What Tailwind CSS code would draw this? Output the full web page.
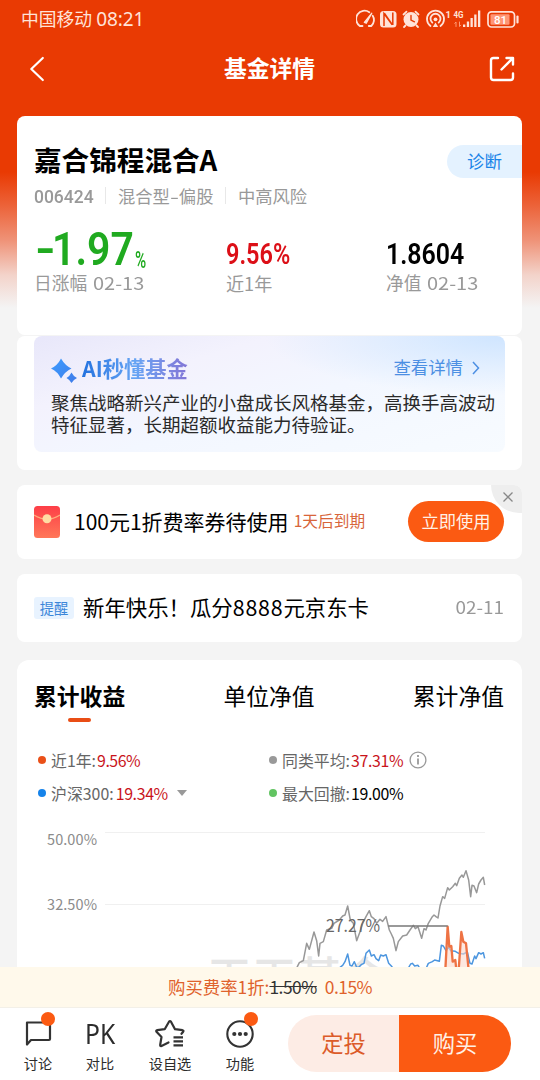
<!DOCTYPE html>
<html lang="zh-CN">
<head>
<meta charset="utf-8">
<title>基金详情</title>
<script src="https://cdn.jsdelivr.net/npm/@tailwindcss/browser@4"></script>
</head>
<body class="bg-[#f4f4f4]">
<div class="flex h-[1080px] w-[540px] flex-col overflow-hidden whitespace-nowrap bg-[#f4f4f4] font-['Noto_Sans_CJK_SC',sans-serif] leading-none text-black">
  <div class="flex h-[967px] shrink-0 flex-col overflow-hidden bg-[linear-gradient(180deg,#e93a03_0px,#e93a03_172px,#ec6238_205px,#ef9277_240px,#f3d3ca_275px,#f4f4f4_308px)]">
    <!-- status bar -->
    <div class="flex h-[38px] shrink-0 items-center justify-between pl-[21px] pr-[20px] text-[#ffe3d9]">
      <div class="flex items-center gap-[4px] text-[17.8px]"><span>中国移动</span><span class="font-['Noto_Sans'] text-[19px] tracking-[-0.1px]">08:21</span></div>
      <svg class="h-[24px] w-[164px]" viewBox="356 6 164 24" fill="none" stroke="#ffe3d9" stroke-width="1.8" stroke-linecap="round">
        <path d="M359.800 25A8 8 0 0 1 369.300 11.200M372.700 14.800A8 8 0 0 1 371.300 25M359.800 25h2.700M368.800 25h2.500" />
        <path d="M364.300 21.500L371.800 12.200L366.300 22.300Z" fill="#ffe3d9" stroke-width="1.200" stroke-linejoin="round"/>
        <rect x="380" y="10" width="16.500" height="16.500" rx="3.500" fill="#ffe3d9" stroke="none"/>
        <path d="M384 25V12.500L392 23.500M392.800 11.500V24M384.500 12.500L392.300 23.800" stroke="#e93a03" stroke-width="1.500" stroke-linecap="butt"/>
        <circle cx="411" cy="18.500" r="7.500" fill="#ffe3d9" stroke="none"/>
        <path d="M403.500 13.500l3-2.800M418.500 13.500l-3-2.800M405.500 24.500l-1.500 1.500M416.500 24.500l1.500 1.500"/>
        <path d="M411 14.500V19l3.500 1.800" stroke="#e93a03" stroke-width="1.400"/>
        <path d="M430.500 25A8.500 8.500 0 1 1 440.500 25M432.300 21.600A5 5 0 1 1 438.700 21.600"/>
        <circle cx="435.500" cy="18.300" r="1.900" fill="#ffe3d9" stroke="none"/><path d="M432.800 26l2.700-4.500 2.700 4.500z" fill="#ffe3d9" stroke="none"/>
        <g fill="#ffe3d9" stroke="none" font-family="Roboto,sans-serif" font-weight="700">
          <text x="445.500" y="16.500" font-size="9.500">1</text>
          <text x="453.500" y="17" font-size="9.500" textLength="10" lengthAdjust="spacingAndGlyphs">4G</text>
          <path d="M463 23.500h2.300v2.500H463zM466.800 20.500h2.300v5.500h-2.300zM470.500 17h2.300v9h-2.300zM474.200 13.500h2.300v12.500h-2.300zM478 9.500h2.300V26H478z"/>
        </g>
        <path d="M456 25.500v-4.500l-1.300 1.300M459.500 21v4.500l1.300-1.300" stroke="#ff9a75" stroke-width="1"/>
        <rect x="488" y="10.800" width="26.500" height="15.200" rx="3.500" stroke-width="1.700"/>
        <rect x="490.500" y="13.200" width="19" height="10.500" rx="1" fill="#ff9675" stroke="none"/>
        <path d="M517.500 15.500v6" stroke-width="2.200"/>
        <text x="494" y="22.500" font-family="Roboto,sans-serif" font-size="11.500" font-weight="500" fill="#fff" stroke="none">81</text>
      </svg>
    </div>
    <!-- title bar -->
    <div class="flex h-[78px] shrink-0 items-start justify-between pl-[29px] pr-[24px] pt-[17px] text-white">
      <svg class="mt-[1px] h-[26px] w-[18px]" viewBox="0 0 18 26" fill="none" stroke="#fff" stroke-width="2.200" stroke-linecap="round" stroke-linejoin="round"><path d="M13.800 2L2.300 13l11.500 11"/></svg>
      <h1 class="ml-[4px] mt-[2px] text-[22.800px] font-bold">基金详情</h1>
      <svg class="h-[28px] w-[28px]" viewBox="0 0 28 28" fill="none" stroke="#fff" stroke-width="2.400" stroke-linecap="round" stroke-linejoin="round"><path d="M10 3H5.500Q3 3 3 5.500v17Q3 25 5.500 25h17q2.500 0 2.500-2.500V18.500M18.500 3H25v6.500M25 3L13.500 14.500"/></svg>
    </div>
    <!-- fund summary -->
    <section class="ml-[17px] mr-[18px] flex h-[219px] shrink-0 flex-col rounded-[8px] bg-white pl-[17px]">
      <div class="mt-[29px] flex h-[33px] items-center justify-between">
        <h2 class="-mt-[3px] text-[27.600px] font-bold">嘉合锦程混合A</h2>
        <div class="flex h-[33px] w-[75px] items-center rounded-l-full bg-[#e4f2ff] pb-[2px] pl-[20px] text-[17.500px] text-[#1a84e8]">诊断</div>
      </div>
      <div class="mt-[8px] flex h-[19px] items-center text-[17.300px] text-[#999]">
        <span class="w-[71px] pt-[2px] font-['Roboto'] text-[19px] font-medium"><span class="inline-block origin-left scale-x-[0.920]">006424</span></span>
        <span class="h-[17px] w-px shrink-0 bg-[#e8e8e8]"></span>
        <span class="flex w-[119px] items-center pl-[12px]">混合型<span class="inline-block w-[9px] origin-left scale-x-[1.500]">-</span>偏股</span>
        <span class="h-[17px] w-px shrink-0 bg-[#e8e8e8]"></span>
        <span class="pl-[12px]">中高风险</span>
      </div>
      <div class="mt-[25px] grid grid-cols-[192px_160px_auto] text-[#999]">
        <div>
          <div class="flex h-[40px] items-end font-['Roboto'] font-semibold text-[#20aa20]"><span class="mb-px inline-flex w-[101px] text-[46px] leading-[40px]"><span class="inline-block w-[22px] origin-left scale-x-[1.200] pl-[1px]">-</span><span class="inline-block origin-left scale-x-[0.890]">1.97</span></span><span class="inline-block origin-left scale-x-[0.660] text-[23px] font-medium leading-[18px]">%</span></div>
          <div class="mt-[4px] text-[17.700px]">日涨幅 <span class="ml-[2px] inline-block origin-left scale-x-[1.130]">02-13</span></div>
        </div>
        <div>
          <div class="flex h-[40px] items-end pb-[1px] font-['Roboto'] text-[29px] font-semibold text-[#dc0f17]"><span class="inline-block origin-left scale-x-[0.810]">9.56%</span></div>
          <div class="mt-[4px] text-[18.100px]">近1年</div>
        </div>
        <div>
          <div class="flex h-[40px] items-end pb-[1px] font-['Roboto'] text-[29px] font-semibold text-black"><span class="inline-block origin-left scale-x-[0.860]">1.8604</span></div>
          <div class="mt-[4px] text-[17.700px]">净值 <span class="ml-[2px] inline-block origin-left scale-x-[1.130]">02-13</span></div>
        </div>
      </div>
    </section>
    <!-- AI summary -->
    <section class="ml-[17px] mr-[18px] mt-[1px] h-[134px] shrink-0 rounded-[8px] bg-white px-[17px]">
      <div class="h-[116px] rounded-[8px] bg-[radial-gradient(ellipse_at_100%_0%,#cfe5ff_0%,#cfe5ff00_36%),linear-gradient(163deg,#e8e7fa_0%,#f3f2fd_28%,#f3f7ff_55%,#f7fbff_100%)] px-[17px] pt-[19px]">
        <div class="flex h-[28px] items-center">
          <svg class="h-[28px] w-[30px]" viewBox="0 0 30 28"><defs><linearGradient id="spark" x2="1" y2="1"><stop stop-color="#3d9cff"/><stop offset="1" stop-color="#3f7be8"/></linearGradient></defs><path fill="url(#spark)" d="M10 3.500Q14 10.500 20.500 13.500Q14 16.500 10 23.500Q6.500 16.500 0 13.500Q6.500 10.500 10 3.500ZM20.500 17.500Q22.300 21.200 26 23Q22.300 24.800 20.500 28Q18.800 24.800 15.500 23Q18.800 21.200 20.500 17.500Z"/></svg>
          <span class="-mt-[2px] ml-[1px] bg-linear-to-r from-[#2272df] via-[#65a4f4] to-[#8276d6] bg-clip-text text-[21.300px] font-bold leading-[28px] text-transparent">AI秒懂基金</span>
          <span class="ml-auto mr-[9px] mt-[-4px] text-[17.400px] text-[#4c8fe3]">查看详情</span>
          <svg class="-mt-[2px] mr-[8px] h-[14px] w-[8px]" viewBox="0 0 8 14" fill="none" stroke="#4c8fe3" stroke-width="1.500"><path d="M1 1l5.500 6L1 13"/></svg>
        </div>
        <p class="mt-[8px] text-[18.500px] leading-[22px] text-[#2a2a2a]">聚焦战略新兴产业的小盘成长风格基金，高换手高波动<br>特征显著，长期超额收益能力待验证。</p>
      </div>
    </section>
    <!-- coupon -->
    <section class="relative ml-[17px] mr-[18px] mt-[15px] flex h-[74px] shrink-0 items-center overflow-hidden rounded-[8px] bg-white pl-[17px] pr-[18px]">
      <svg class="h-[32px] w-[26px]" viewBox="0 0 26 32"><defs><linearGradient id="env" x2="0" y2="1"><stop stop-color="#fd3e47"/><stop offset="1" stop-color="#ff7759"/></linearGradient></defs><rect width="26" height="32" rx="3.500" fill="url(#env)"/><path d="M0 9Q13 17.500 26 9" fill="none" stroke="#ffae7c" stroke-width="1.200"/><circle cx="13" cy="12.800" r="4.500" fill="#ffdca3"/></svg>
      <span class="-mt-[2px] ml-[14px] text-[21px]">100元1折费率券待使用</span>
      <span class="ml-[5px] mt-[-3px] text-[15.700px] text-[#d8653a]">1天后到期</span>
      <span class="-mt-px ml-auto flex h-[41px] w-[96px] items-center justify-center rounded-full bg-[#fb5a12] pb-[2px] text-[17.300px] text-[#fff1e6]">立即使用</span>
      <span class="absolute right-0 top-0 flex h-[28px] w-[31px] items-center justify-center rounded-bl-[28px] bg-[#eee] pl-[3px] pt-[1px]"><svg class="-mt-[5px] h-[10px] w-[10px]" viewBox="0 0 10 10" stroke="#888" stroke-width="1.300"><path d="M.5.500l9 9M9.500.500l-9 9"/></svg></span>
    </section>
    <!-- notice -->
    <section class="ml-[17px] mr-[18px] mt-[15px] flex h-[68px] shrink-0 items-center rounded-[8px] bg-white pl-[17px] pr-[18px]">
      <span class="flex h-[22px] w-[40px] items-center justify-center rounded-[3px] bg-[#e8f3ff] text-[14.300px] text-[#3b86d9]">提醒</span>
      <span class="-mt-[2px] ml-[9px] text-[21.400px]">新年快乐！瓜分<span class="tracking-[0.800px]">8888</span>元京东卡</span>
      <span class="-mt-[2px] ml-auto origin-right scale-x-[1.080] text-[17.500px] text-[#999]">02-11</span>
    </section>
    <!-- performance -->
    <section class="ml-[17px] mr-[18px] mt-[18px] flex h-[330px] shrink-0 flex-col rounded-t-[12px] bg-white">
      <div class="flex justify-between pl-[17px] pr-[18px] pt-[25px] text-[22.800px]">
        <div class="flex flex-col items-center gap-[10px] font-bold"><span>累计收益</span><i class="h-[4px] w-[23px] rounded-full bg-[#e94d15]"></i></div>
        <span>单位净值</span><span>累计净值</span>
      </div>
      <div class="mt-[22px] grid grid-cols-[231px_auto] pl-[21px] text-[15.900px] leading-[33px] text-[#666]">
        <div class="flex items-center"><i class="mr-[5px] h-[8px] w-[8px] rounded-full bg-[#ea5018]"></i>近1年:<span class="ml-px tracking-[-0.450px] text-[#c9141b]">9.56%</span></div>
        <div class="flex items-center"><i class="mr-[5px] h-[8px] w-[8px] rounded-full bg-[#999]"></i>同类平均:<span class="ml-px tracking-[-0.350px] text-[#c9141b]">37.31%</span><svg class="ml-[6px] h-[18px] w-[18px]" viewBox="0 0 18 18" fill="none" stroke="#999" stroke-width="1.300"><circle cx="9" cy="9" r="7.900"/><path d="M9 7.500v6M9 4v2" stroke-width="1.800"/></svg></div>
        <div class="flex items-center"><i class="mr-[5px] h-[8px] w-[8px] rounded-full bg-[#1683ea]"></i>沪深300:<span class="ml-[2px] tracking-[-0.350px] text-[#c9141b]">19.34%</span><i class="ml-[9px] border-x-[5px] border-t-[6px] border-x-transparent border-t-[#999]"></i></div>
        <div class="flex items-center"><i class="mr-[5px] h-[8px] w-[8px] rounded-full bg-[#62c462]"></i>最大回撤:<span class="ml-px tracking-[-0.350px] text-black">19.00%</span></div>
      </div>
      <svg class="mt-[10px] h-[170px] w-[505px] shrink-0" viewBox="17 820 505 170" fill="none">
        <path d="M105 832.500H485M105 904.500H485" stroke="#f0f0f0"/>
        <g fill="#8c8c8c" font-size="14.500" font-family="'Noto Sans CJK SC',sans-serif"><text x="47" y="844.500" textLength="50">50.00%</text><text x="47" y="909.500" textLength="50">32.50%</text></g>
        <text x="207" y="995" font-size="45" font-weight="500" fill="#e6e6e6" font-family="'Noto Sans CJK SC',sans-serif">天天基金</text>
        <g transform="translate(180 820) scale(.33333)" stroke-linejoin="round">
          <path stroke="#989898" stroke-width="4.500" d="M346 450L352 440 358 428 370 422 380 370 388 388 402 336 410 362 416 408 420 370 430 365 440 330 455 325 462 310 478 300 488 288 495 285 503 258 511 300 520 310 530 362 540 335 548 310 558 290 568 272 574 290 582 296 590 310 600 298 608 304 618 290 628 330 634 342 640 355 648 392 655 365 668 348 680 345 690 330 700 316 706 326 714 320 725 355 732 326 738 330 745 310 757 290 762 285 768 290 774 294 780 258 788 230 794 235 803 203 808 210 818 200 826 190 830 197 838 175 846 165 850 172 858 152 866 180 872 230 876 196 882 198 890 218 896 192 903 180 910 172 914 195"/>
          <path stroke="#4d96df" stroke-width="4.500" d="M480 442L488 436 495 425 503 402 510 436 516 438 523 425 530 442 536 442 545 433 552 430 558 400 568 390 574 408 582 404 588 416 596 422 602 405 610 408 618 404 626 430 634 438 640 446 684 446 692 432 697 430 704 438 714 436 720 446 738 446 745 430 757 425 764 420 778 424 784 376 790 378 798 392 806 382 812 392 826 394 836 400 850 402 862 396 870 430 876 432 884 408 888 416 896 398 903 402 910 398 914 415"/>
          <path fill="#fbd9cc" fill-opacity=".6" stroke="#ee7344" stroke-width="7" d="M796 450L803 320 808 380 814 378 818 425 826 420 829 450 836 450 844 336 850 365 858 370 862 410 866 450"/>
          <path stroke="#777" stroke-width="5" d="M625 318H803"/>
        </g>
        <text x="326" y="932" font-size="17" fill="#666" textLength="54" lengthAdjust="spacingAndGlyphs" font-family="'Noto Sans CJK SC',sans-serif">27.27%</text>
      </svg>
    </section>
  </div>
  <!-- fee bar -->
  <div class="flex h-[41px] shrink-0 items-center border-b border-[#f3f0e8] bg-[#fff9eb] pl-[168px] text-[17.400px] text-[#df622c]"><span>购买费率1折:</span><s class="tracking-[-0.500px] text-[#333]">1.50%</s><span class="ml-[8px] tracking-[-0.500px]">0.15%</span></div>
  <!-- action bar -->
  <div class="flex h-[72px] shrink-0 bg-white text-[14.200px] text-[#2c2c2c]">
    <nav class="grid w-[288px] grid-cols-[76px_48px_92px_48px] pt-[10px]">
      <div class="flex flex-col items-center"><div class="relative h-[32px] w-[32px]"><svg class="h-[32px] w-[32px]" viewBox="0 0 32 32" fill="none" stroke="#333" stroke-width="2.200" stroke-linejoin="round"><path d="M5 4.500h22a1 1 0 0 1 1 1v15.500a1 1 0 0 1-1 1H9l-4 4.500z"/></svg><i class="absolute left-[19px] top-[-6px] h-[14px] w-[14px] rounded-full bg-[#fb5a12]"></i></div><span class="mt-[6px]">讨论</span></div>
      <div class="flex flex-col items-center"><div class="flex h-[32px] items-center pb-[2px] font-['Noto_Sans'] text-[28px]"><span class="scale-x-[0.880]">PK</span></div><span class="mt-[6px]">对比</span></div>
      <div class="flex flex-col items-center"><svg class="h-[32px] w-[32px]" viewBox="0 0 32 32" fill="none" stroke="#333" stroke-width="2.200" stroke-linejoin="round" stroke-linecap="round"><path d="M14.500 24.500L7.500 28Q6 28.500 6.200 26.800L7.500 19 2.500 13.800Q1.600 12.500 3.300 12.200L10.700 11.200 15 3.700Q16 2.400 17 3.700L21 11.200 28.500 12.200Q30.200 12.600 29 14L27.500 15.800"/><path d="M19.500 19.300H29M19.500 23.300H29M19.500 27.300H29" stroke-linecap="butt"/></svg><span class="mt-[6px]">设自选</span></div>
      <div class="flex flex-col items-center"><div class="relative h-[32px] w-[32px]"><svg class="h-[32px] w-[32px]" viewBox="0 0 32 32"><circle cx="16" cy="16" r="12.700" fill="none" stroke="#333" stroke-width="2.100"/><g fill="#333"><circle cx="10.300" cy="16" r="2.100"/><circle cx="16" cy="16" r="2.100"/><circle cx="21.700" cy="16" r="2.100"/></g></svg><i class="absolute left-[20px] top-[-6px] h-[14px] w-[14px] rounded-full bg-[#fb5a12]"></i></div><span class="mt-[6px]">功能</span></div>
    </nav>
    <div class="mt-[7px] flex h-[57px] w-[223px] overflow-hidden rounded-full text-[22.300px]">
      <span class="flex w-[111px] items-center justify-center bg-[#fdece5] pb-[2px] text-[#dc5b29]">定投</span>
      <span class="flex flex-1 items-center justify-center bg-[#fb5a12] pb-[2px] text-[#fff1e6]">购买</span>
    </div>
  </div>
</div>
</body>
</html>
